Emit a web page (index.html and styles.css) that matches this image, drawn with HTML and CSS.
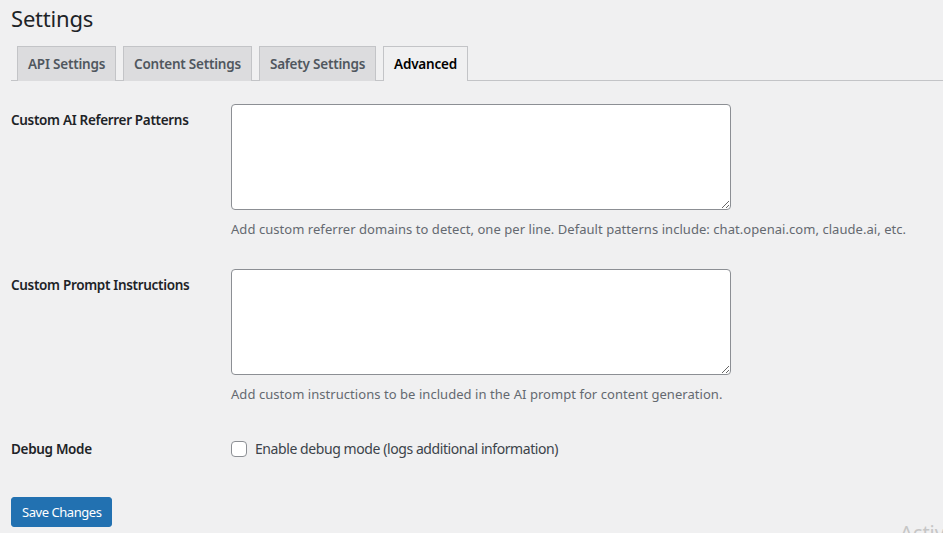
FILE: index.html
```html
<!DOCTYPE html>
<html lang="en">
<head>
<meta charset="utf-8">
<title>Settings</title>
<link rel="stylesheet" href="styles.css">
</head>
<body>
<div class="wrap">
  <h1 class="title">Settings</h1>
  <nav class="tabs">
    <a class="tab">API Settings</a>
    <a class="tab">Content Settings</a>
    <a class="tab">Safety Settings</a>
    <a class="tab active">Advanced</a>
  </nav>
  <form class="form">
    <div class="row">
      <div class="label">Custom AI Referrer Patterns</div>
      <div class="field">
        <textarea class="area"></textarea>
        <p class="desc">Add custom referrer domains to detect, one per line. Default patterns include: chat.openai.com, claude.ai, etc.</p>
      </div>
    </div>
    <div class="row">
      <div class="label">Custom Prompt Instructions</div>
      <div class="field">
        <textarea class="area"></textarea>
        <p class="desc">Add custom instructions to be included in the AI prompt for content generation.</p>
      </div>
    </div>
    <div class="row row-check">
      <div class="label">Debug Mode</div>
      <div class="field">
        <label class="check"><span class="box"></span>Enable debug mode (logs additional information)</label>
      </div>
    </div>
    <div class="submit">
      <button type="button" class="btn">Save Changes</button>
    </div>
  </form>
</div>
<div class="watermark">Activate Windows</div>
</body>
</html>
```
FILE: styles.css
```css
html, body {
  margin: 0;
  padding: 0;
  background: #f0f0f1;
  height: 100%;
  overflow: hidden;
}
body {
  font-family: "Noto Sans", "Open Sans", sans-serif;
  color: #3c434a;
  font-size: 13px;
}
.wrap {
  padding: 0 0 0 11px;
}
.title {
  margin: 0;
  padding: 3px 0 0;
  font-size: 22px;
  font-weight: 400;
  line-height: 30px;
  color: #1d2327;
  letter-spacing: -0.2px;
}
.tabs {
  display: flex;
  margin-top: 13px;
  padding-left: 6px;
  border-bottom: 1px solid #c3c4c7;
  height: 34px;
}
.tab {
  display: block;
  margin-right: 7px;
  margin-bottom: -1px;
  padding: 5px 10px 4px;
  border: 1px solid #c3c4c7;
  border-bottom: none;
  background: #dcdcde;
  color: #50575e;
  font-size: 13.5px;
  font-weight: 600;
  line-height: 24px;
  letter-spacing: -0.22px;
}
.tab.active {
  background: #f0f0f1;
  color: #000;
  height: 35px;
  box-sizing: border-box;
}
.form {
  padding-top: 8px;
}
.row {
  display: flex;
}
.label {
  width: 200px;
  flex: none;
  padding: 22px 10px 0 0;
  font-size: 13.5px;
  font-weight: 600;
  line-height: 18px;
  color: #1d2327;
  letter-spacing: -0.32px;
}
.field {
  padding: 15px 10px;
}
.area {
  display: block;
  box-sizing: border-box;
  width: 500px;
  height: 106px;
  margin: 0;
  border: 1px solid #8c8f94;
  border-radius: 4px;
  background: #fff;
}
.desc {
  margin: 9px 0 0;
  font-size: 13px;
  line-height: 20px;
  color: #646970;
  letter-spacing: 0.05px;
}
.desc-wide {
  letter-spacing: 0.1px;
}
.row-check .label {
  padding-top: 21px;
}
.row-check .field {
  padding-top: 22px;
}
.check {
  display: flex;
  align-items: center;
  font-size: 14px;
  line-height: 16px;
  color: #3c434a;
  letter-spacing: -0.42px;
}
.box {
  width: 16px;
  height: 16px;
  box-sizing: border-box;
  border: 1px solid #8c8f94;
  border-radius: 4px;
  background: #fff;
  margin-right: 8px;
}
.submit {
  padding-top: 25px;
}
.btn {
  font-family: inherit;
  font-size: 13px;
  line-height: 28px;
  height: 30px;
  padding: 0 10px;
  background: #2271b1;
  border: 1px solid #2271b1;
  border-radius: 3px;
  color: #fff;
  letter-spacing: -0.45px;
}
.watermark {
  position: absolute;
  left: 900px;
  top: 519px;
  font-family: "Noto Sans", sans-serif;
  font-size: 20px;
  color: #c6c6c6;
  white-space: nowrap;
}
```
